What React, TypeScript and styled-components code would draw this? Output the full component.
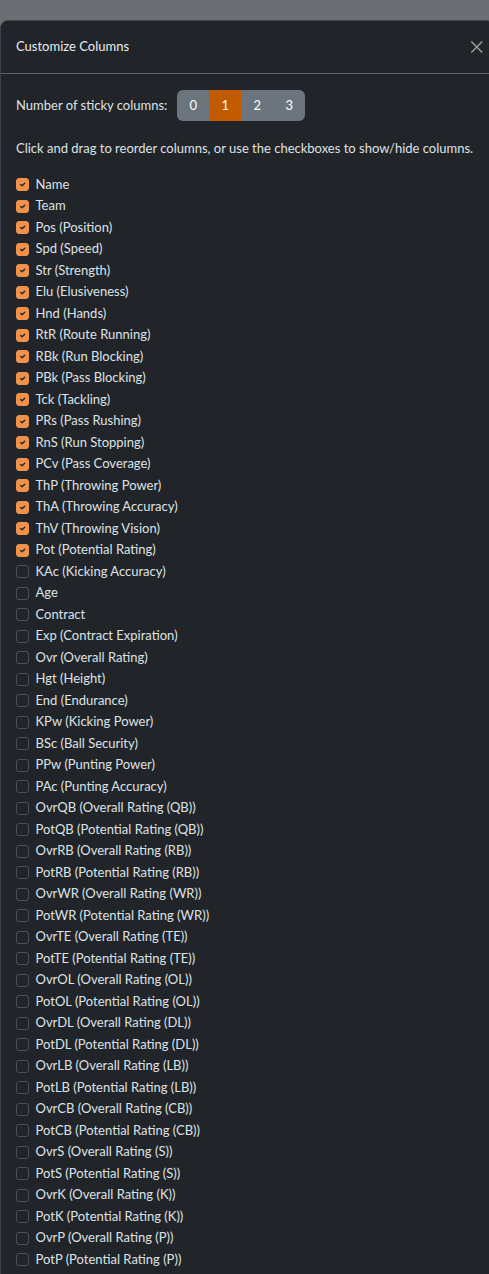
import React, { useState } from "react";
import styled, { createGlobalStyle } from "styled-components";

const GlobalStyle = createGlobalStyle`
  html, body { margin: 0; padding: 0; }
  body {
    background: #6b6e72;
    font-family: Lato, "Open Sans", sans-serif;
    font-size: 13px;
    line-height: 1.5;
    color: #dee2e6;
    overflow: hidden;
    height: 1274px;
  }
`;

const Backdrop = styled.div`
  padding-top: 20px;
  width: 489px;
  height: 1254px;
  overflow: hidden;
`;

const Modal = styled.div`
  width: 494px;
  background: #212529;
  border: 1px solid #3d4246;
  border-radius: 8px;
  box-sizing: border-box;
`;

const Header = styled.div`
  display: flex;
  align-items: center;
  padding: 16px 15px;
  border-bottom: 1px solid #5c636a;
`;

const Title = styled.h5`
  margin: 0;
  font-size: 13px;
  font-weight: 400;
  line-height: 1.5;
  color: #e9ecef;
`;

const CloseButton = styled.button`
  margin: -8px -8px -8px auto;
  width: 19.5px;
  height: 19.5px;
  padding: 3px;
  border: 0;
  background: transparent;
  display: flex;
  align-items: center;
  justify-content: center;
  opacity: 0.55;
  cursor: pointer;
`;

const Body = styled.div`
  padding: 16px 15px;
`;

const StickyRow = styled.div`
  display: flex;
  align-items: center;
  gap: 10px;
  margin-bottom: 18px;
`;

const ButtonGroup = styled.div`
  display: inline-flex;
  border-radius: 6px;
  overflow: hidden;
`;

const GroupButton = styled.button<{ $active?: boolean }>`
  font-family: inherit;
  font-size: 13px;
  line-height: 1.5;
  width: 32px;
  padding: 6px 0;
  border: 0;
  color: #fff;
  background: ${(p) => (p.$active ? "#c25a00" : "#6c757d")};
  cursor: pointer;
`;

const Help = styled.p`
  margin: 0 0 16px;
  white-space: nowrap;
`;

const List = styled.div`
  display: flex;
  flex-direction: column;
`;

const Item = styled.label`
  display: flex;
  align-items: flex-start;
  min-height: 19.5px;
  margin-bottom: 2px;
  padding-left: 19.5px;
  position: relative;
  cursor: grab;
`;

const Box = styled.span<{ $checked: boolean }>`
  position: absolute;
  left: 0;
  top: 3.5px;
  width: 13px;
  height: 13px;
  box-sizing: border-box;
  border-radius: 3px;
  border: 1px solid ${(p) => (p.$checked ? "#f0924a" : "#4b5157")};
  background: ${(p) => (p.$checked ? "#f0924a" : "#212529")};
  display: flex;
  align-items: center;
  justify-content: center;
`;

const columns: [string, boolean][] = [
  ["Name", true],
  ["Team", true],
  ["Pos (Position)", true],
  ["Spd (Speed)", true],
  ["Str (Strength)", true],
  ["Elu (Elusiveness)", true],
  ["Hnd (Hands)", true],
  ["RtR (Route Running)", true],
  ["RBk (Run Blocking)", true],
  ["PBk (Pass Blocking)", true],
  ["Tck (Tackling)", true],
  ["PRs (Pass Rushing)", true],
  ["RnS (Run Stopping)", true],
  ["PCv (Pass Coverage)", true],
  ["ThP (Throwing Power)", true],
  ["ThA (Throwing Accuracy)", true],
  ["ThV (Throwing Vision)", true],
  ["Pot (Potential Rating)", true],
  ["KAc (Kicking Accuracy)", false],
  ["Age", false],
  ["Contract", false],
  ["Exp (Contract Expiration)", false],
  ["Ovr (Overall Rating)", false],
  ["Hgt (Height)", false],
  ["End (Endurance)", false],
  ["KPw (Kicking Power)", false],
  ["BSc (Ball Security)", false],
  ["PPw (Punting Power)", false],
  ["PAc (Punting Accuracy)", false],
  ["OvrQB (Overall Rating (QB))", false],
  ["PotQB (Potential Rating (QB))", false],
  ["OvrRB (Overall Rating (RB))", false],
  ["PotRB (Potential Rating (RB))", false],
  ["OvrWR (Overall Rating (WR))", false],
  ["PotWR (Potential Rating (WR))", false],
  ["OvrTE (Overall Rating (TE))", false],
  ["PotTE (Potential Rating (TE))", false],
  ["OvrOL (Overall Rating (OL))", false],
  ["PotOL (Potential Rating (OL))", false],
  ["OvrDL (Overall Rating (DL))", false],
  ["PotDL (Potential Rating (DL))", false],
  ["OvrLB (Overall Rating (LB))", false],
  ["PotLB (Potential Rating (LB))", false],
  ["OvrCB (Overall Rating (CB))", false],
  ["PotCB (Potential Rating (CB))", false],
  ["OvrS (Overall Rating (S))", false],
  ["PotS (Potential Rating (S))", false],
  ["OvrK (Overall Rating (K))", false],
  ["PotK (Potential Rating (K))", false],
  ["OvrP (Overall Rating (P))", false],
  ["PotP (Potential Rating (P))", false],
];

export default function App() {
  const [sticky, setSticky] = useState(1);
  const [checked, setChecked] = useState(columns.map((c) => c[1]));
  return (
    <>
      <GlobalStyle />
      <Backdrop>
        <Modal>
          <Header>
            <Title>Customize Columns</Title>
            <CloseButton aria-label="Close">
              <svg width="14" height="14" viewBox="0 0 16 16">
                <path d="M1.5 1.5 L14.5 14.5 M14.5 1.5 L1.5 14.5" stroke="#fff" strokeWidth="1.8" fill="none" />
              </svg>
            </CloseButton>
          </Header>
          <Body>
            <StickyRow>
              <span>Number of sticky columns:</span>
              <ButtonGroup>
                {[0, 1, 2, 3].map((n) => (
                  <GroupButton key={n} $active={n === sticky} onClick={() => setSticky(n)}>
                    {n}
                  </GroupButton>
                ))}
              </ButtonGroup>
            </StickyRow>
            <Help>Click and drag to reorder columns, or use the checkboxes to show/hide columns.</Help>
            <List>
              {columns.map(([label], i) => (
                <Item
                  key={label}
                  onClick={() => setChecked((c) => c.map((v, j) => (j === i ? !v : v)))}
                >
                  <Box $checked={checked[i]}>
                    {checked[i] && (
                      <svg width="9" height="9" viewBox="0 0 20 20">
                        <path d="M6 10l3 3 6-6" stroke="#212529" strokeWidth="3" fill="none" strokeLinecap="round" strokeLinejoin="round" />
                      </svg>
                    )}
                  </Box>
                  <span>{label}</span>
                </Item>
              ))}
            </List>
          </Body>
        </Modal>
      </Backdrop>
    </>
  );
}
